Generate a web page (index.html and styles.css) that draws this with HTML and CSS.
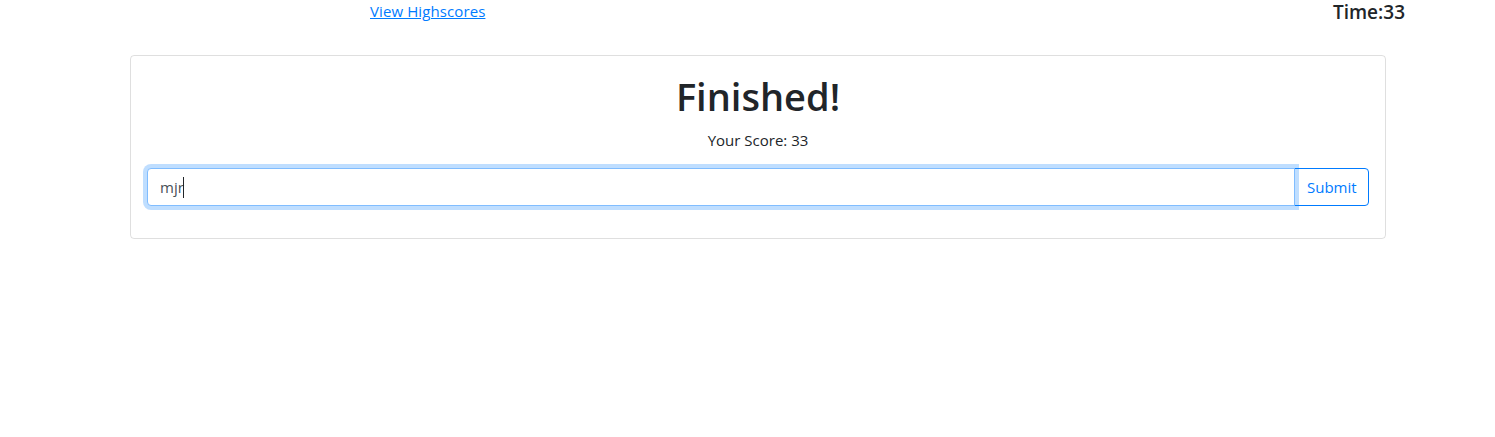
FILE: index.html
```
<!DOCTYPE html>
<html lang="en">
<head>
<meta charset="utf-8">
<title>Quiz</title>
<link rel="stylesheet" href="styles.css">
</head>
<body>
<header class="topbar">
  <a class="hs-link" href="#">View Highscores</a>
  <span class="timer">Time:33</span>
</header>
<main class="wrap">
  <section class="card">
    <h1 class="title">Finished!</h1>
    <p class="score">Your Score: 33</p>
    <form class="input-group">
      <div class="field">
        <input class="name-input" type="text" value="mjr">
        <span class="caret"></span>
      </div>
      <button class="submit-btn" type="button">Submit</button>
    </form>
  </section>
</main>
</body>
</html>
```
FILE: styles.css
```
* { box-sizing: border-box; }
html, body { margin: 0; padding: 0; background: #fff; }
body {
  font-family: "Open Sans", "Noto Sans", sans-serif;
  font-size: 16px;
  line-height: 1.5;
  color: #212529;
}
.topbar {
  display: flex;
  justify-content: space-between;
  align-items: flex-start;
  height: 24px;
  padding-left: 370px;
  padding-right: 90px;
}
.hs-link {
  color: #007bff;
  text-decoration: underline;
  font-size: 15px;
  line-height: 22px;
  letter-spacing: 0.1px;
}
.timer {
  font-size: 19px;
  font-weight: 600;
  line-height: 24px;
}
.wrap {
  padding-top: 31px;
  padding-left: 130px;
}
.card {
  width: 1256px;
  border: 1px solid rgba(0,0,0,.125);
  border-radius: 4px;
  padding: 16px;
  text-align: center;
}
.title {
  margin: 0 0 8px;
  font-size: 38px;
  font-weight: 600;
  line-height: 48px;
}
.score {
  margin: 0 0 16px;
  font-size: 15px;
  line-height: 24px;
}
.input-group {
  display: flex;
  margin: 0 0 16px;
}
.field {
  flex: 1;
  position: relative;
  z-index: 2;
  display: flex;
}
.name-input {
  flex: 1;
  height: 38px;
  margin: 0;
  padding: 6px 12px;
  font-family: inherit;
  font-size: 15px;
  color: #495057;
  border: 1px solid #80bdff;
  border-radius: 4px 0 0 4px;
  box-shadow: 0 0 0 4px rgba(0,123,255,.25);
  outline: none;
}
.caret {
  position: absolute;
  left: 36px;
  top: 9px;
  width: 1px;
  height: 21px;
  background: #212529;
}
.submit-btn {
  width: 75px;
  height: 38px;
  margin-left: -1px;
  font-family: inherit;
  font-size: 15px;
  color: #007bff;
  background: #fff;
  border: 1px solid #007bff;
  border-radius: 0 4px 4px 0;
  padding: 6px 12px;
}
```
